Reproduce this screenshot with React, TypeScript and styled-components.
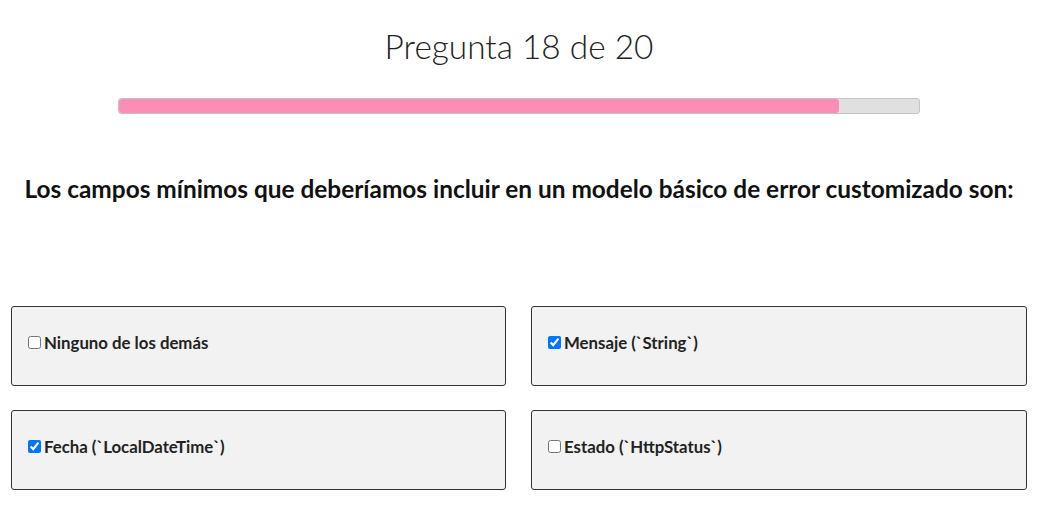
import React from "react";
import styled, { createGlobalStyle } from "styled-components";

const Global = createGlobalStyle`
  html, body { margin: 0; padding: 0; background: #fff; }
  body { font-family: Lato, "Open Sans", sans-serif; color: #222; }
`;

const Page = styled.div`
  width: 1038px;
  display: flex;
  flex-direction: column;
  align-items: center;
`;

const Title = styled.h1`
  margin: 26px 0 0;
  font-weight: 300;
  font-size: 33.4px;
  line-height: 40px;
  color: #222;
`;

const Track = styled.div`
  margin-top: 32px;
  width: 800px;
  height: 14px;
  border: 1px solid #c4c4c4;
  border-radius: 3px;
  background: #e0e0e0;
  overflow: hidden;
`;

const Fill = styled.div`
  height: 100%;
  background: #fb8db6;
  border-radius: 3px;
`;

const Question = styled.h2`
  margin: 60px 0 0;
  font-weight: 700;
  font-size: 24.4px;
  line-height: 30px;
  color: #111;
  text-align: center;
`;

const Grid = styled.div`
  margin-top: 102px;
  align-self: stretch;
  padding: 0 11px;
  display: grid;
  grid-template-columns: 495px 496px;
  gap: 24px 25px;
`;

const Card = styled.label`
  height: 80px;
  box-sizing: border-box;
  border: 1px solid #333;
  border-radius: 3px;
  background: #f2f2f2;
  display: flex;
  align-items: center;
  padding: 0 0 7px 12px;
  font-weight: 700;
  font-size: 16.8px;
  color: #222;
  cursor: pointer;
`;

const Box = styled.input`
  margin: 0 3px 0 4px;
  width: 13px;
  height: 13px;
`;

const options = [
  { text: "Ninguno de los demás", checked: false },
  { text: "Mensaje (`String`)", checked: true },
  { text: "Fecha (`LocalDateTime`)", checked: true },
  { text: "Estado (`HttpStatus`)", checked: false },
];

export default function App() {
  return (
    <Page>
      <Global />
      <Title>Pregunta 18 de 20</Title>
      <Track>
        <Fill style={{ width: `${(18 / 20) * 100}%` }} />
      </Track>
      <Question>
        Los campos mínimos que deberíamos incluir en un modelo básico de error customizado son:
      </Question>
      <Grid>
        {options.map((o) => (
          <Card key={o.text}>
            <Box type="checkbox" defaultChecked={o.checked} />
            {o.text}
          </Card>
        ))}
      </Grid>
    </Page>
  );
}
